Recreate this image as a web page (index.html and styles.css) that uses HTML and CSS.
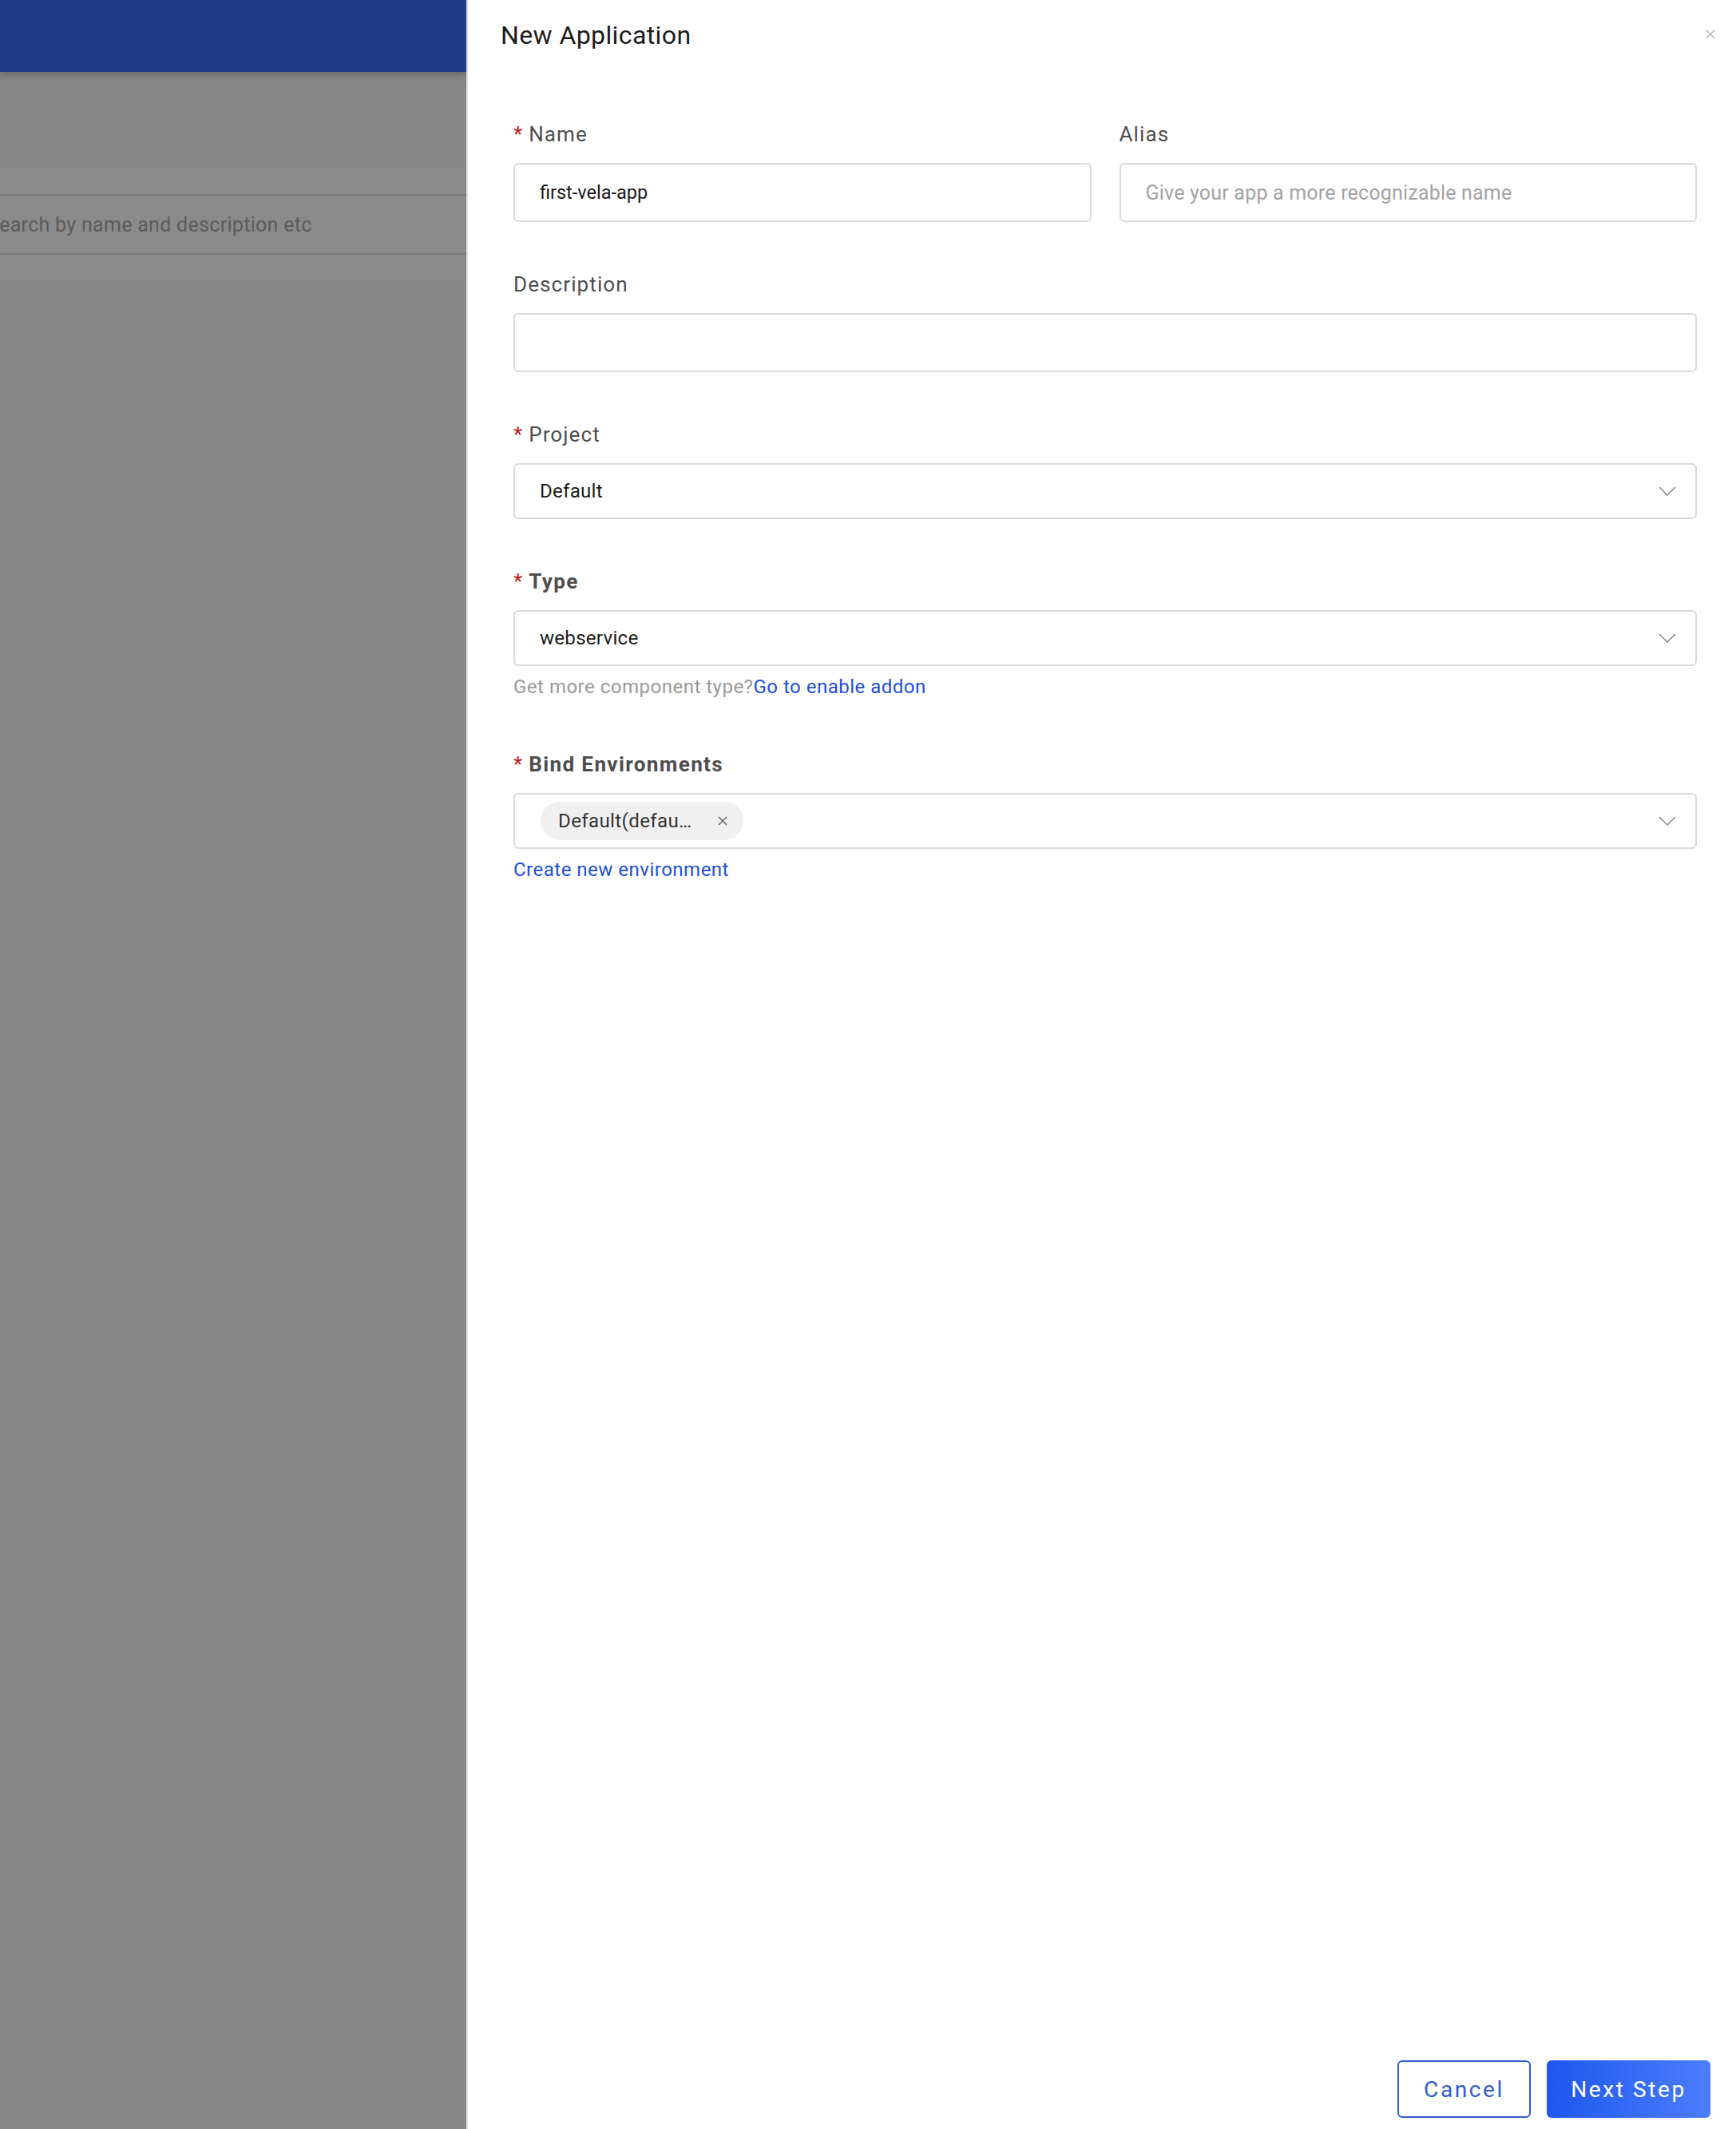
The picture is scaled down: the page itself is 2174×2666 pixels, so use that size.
FILE: index.html
```html
<!DOCTYPE html>
<html lang="en">
<head>
    <meta charset="UTF-8">
    <meta name="viewport" content="width=device-width, initial-scale=1.0">
    <title>New Application</title>

    <link rel="stylesheet" href="styles.css">
</head>
<body>
    <div class="layout">
        <!-- dimmed page behind the drawer -->
        <div class="backdrop">
            <div class="top-bar"></div>
            <div class="toolbar"></div>
            <div class="search-band">
                <div class="search-box">
                    <span class="search-text">Search by name and description etc</span>
                </div>
            </div>
            <div class="list-area"></div>
        </div>

        <div class="drawer">
            <div class="drawer-header">
                <span class="drawer-title">New Application</span>
                <span class="close-btn">
                    <svg width="14" height="14" viewBox="0 0 14 14">
                        <path d="M2 2 L12 12 M12 2 L2 12" stroke="#b3b3b3" stroke-width="1.6" fill="none"/>
                    </svg>
                </span>
            </div>

            <div class="drawer-body">
                <div class="form-row">
                    <div class="form-item">
                        <div class="label"><span class="required">*</span>Name</div>
                        <div class="input"><span class="value">first-vela-app</span></div>
                    </div>
                    <div class="form-item">
                        <div class="label">Alias</div>
                        <div class="input"><span class="placeholder">Give your app a more recognizable name</span></div>
                    </div>
                </div>

                <div class="form-item">
                    <div class="label">Description</div>
                    <div class="input"></div>
                </div>

                <div class="form-item">
                    <div class="label"><span class="required">*</span>Project</div>
                    <div class="select">
                        <span class="value">Default</span>
                        <svg class="arrow" width="22" height="12" viewBox="0 0 22 12">
                            <path d="M1 1 L11 11 L21 1" stroke="#8c8c8c" stroke-width="1.6" fill="none"/>
                        </svg>
                    </div>
                </div>

                <div class="form-item">
                    <div class="label bold"><span class="required">*</span>Type</div>
                    <div class="select">
                        <span class="value">webservice</span>
                        <svg class="arrow" width="22" height="12" viewBox="0 0 22 12">
                            <path d="M1 1 L11 11 L21 1" stroke="#8c8c8c" stroke-width="1.6" fill="none"/>
                        </svg>
                    </div>
                    <div class="help">Get more component type?<a href="#" class="link">Go to enable addon</a></div>
                </div>

                <div class="form-item">
                    <div class="label bold"><span class="required">*</span>Bind Environments</div>
                    <div class="select tags">
                        <span class="tag">
                            <span class="tag-text">Default(defau…</span>
                            <svg width="16" height="16" viewBox="0 0 16 16">
                                <path d="M3 3 L13 13 M13 3 L3 13" stroke="#666" stroke-width="1.5" fill="none"/>
                            </svg>
                        </span>
                        <svg class="arrow" width="22" height="12" viewBox="0 0 22 12">
                            <path d="M1 1 L11 11 L21 1" stroke="#8c8c8c" stroke-width="1.6" fill="none"/>
                        </svg>
                    </div>
                    <div class="help"><a href="#" class="link">Create new environment</a></div>
                </div>
            </div>

            <div class="drawer-footer">
                <button class="button button-outline">Cancel</button>
                <button class="button button-primary">Next Step</button>
            </div>
        </div>
    </div>
</body>
</html>
```

FILE: styles.css
```css
body {
    margin: 0;
    font-family: Roboto, 'Liberation Sans', Arial, sans-serif;
    overflow: hidden;
}

.layout {
    display: flex;
    width: 2174px;
    height: 2666px;
}

/* ---- dimmed background page ---- */

.backdrop {
    width: 584px;
    flex-shrink: 0;
    display: flex;
    flex-direction: column;
    background-color: #878787;
    overflow: hidden;
}

.top-bar {
    height: 90px;
    background-color: #1f3b8a;
    box-shadow: 0 3px 8px rgba(0, 0, 0, 0.25);
    position: relative;
}

.toolbar {
    height: 120px;
    background-color: #878787;
}

.search-band {
    background-color: #8a8a8a;
    padding: 33px 0 32px 0;
}

.search-box {
    height: 72px;
    border-top: 2px solid #7b7b7b;
    border-bottom: 2px solid #7b7b7b;
    display: flex;
    align-items: center;
    overflow: hidden;
}

.search-text {
    margin-left: -16px;
    font-size: 25px;
    color: #5c5c5c;
    white-space: nowrap;
    letter-spacing: 0.3px;
}

.list-area {
    flex: 1;
    background-color: #878787;
}

/* ---- drawer ---- */

.drawer {
    flex: 1;
    background-color: #fff;
    border-left: 2px solid #e3e3e3;
    display: flex;
    flex-direction: column;
}

.drawer-header {
    display: flex;
    align-items: center;
    justify-content: space-between;
    height: 88px;
    padding: 0 25px 0 41px;
}

.drawer-title {
    font-size: 32px;
    color: #1c1c1c;
    letter-spacing: 0.4px;
}

.close-btn {
    display: flex;
    margin-top: -2px;
}

.drawer-body {
    flex: 1;
    padding: 60px 49px 0 57px;
}

.form-row {
    display: flex;
    gap: 35px;
}

.form-row .form-item {
    flex: 1;
}

.form-item {
    margin-bottom: 58px;
}

.label {
    height: 40px;
    line-height: 40px;
    font-size: 26px;
    color: #4d4d4d;
    letter-spacing: 1.1px;
    margin-bottom: 16px;
}

.label.bold {
    font-weight: bold;
    letter-spacing: 1.4px;
}

.required {
    color: #c2161b;
    margin-right: 8px;
    font-weight: normal;
    letter-spacing: 0;
}

.input {
    height: 70px;
    border: 2px solid #dadada;
    border-radius: 6px;
    display: flex;
    align-items: center;
    padding: 0 31px;
}

.select {
    height: 66px;
    border: 2px solid #dadada;
    border-radius: 6px;
    display: flex;
    align-items: center;
    justify-content: space-between;
    padding: 0 24px 0 31px;
}

.value {
    font-size: 24px;
    color: #1a1a1a;
    letter-spacing: 0.3px;
}

.input .value {
    font-size: 23.5px;
    letter-spacing: 0;
}

.placeholder {
    font-size: 25px;
    color: #a3a3a3;
    letter-spacing: 0.2px;
}

.tags {
    padding-left: 32px;
}

.tag {
    display: flex;
    align-items: center;
    gap: 30px;
    height: 48px;
    padding: 0 18px 0 22px;
    background-color: #f0f0f0;
    border-radius: 24px;
}

.tag-text {
    font-size: 24px;
    color: #333;
    letter-spacing: 0.4px;
}

.help {
    margin-top: 7px;
    height: 38px;
    line-height: 38px;
    font-size: 24px;
    color: #999;
    letter-spacing: 0.5px;
}

.link {
    color: #1d4fd6;
    text-decoration: none;
}

.drawer-footer {
    display: flex;
    justify-content: flex-end;
    gap: 20px;
    padding: 0 32px 14px 0;
}

.button {
    height: 72px;
    border-radius: 6px;
    font-family: Roboto, 'Liberation Sans', Arial, sans-serif;
    font-size: 28px;
    letter-spacing: 2.6px;
    cursor: pointer;
}

.button-outline {
    width: 167px;
    background-color: #fff;
    color: #2f5bd0;
    border: 2px solid #2f5bd0;
}

.button-primary {
    width: 205px;
    color: #fff;
    border: none;
    background: linear-gradient(90deg, #1f57ee, #4b7dfc);
}
```
